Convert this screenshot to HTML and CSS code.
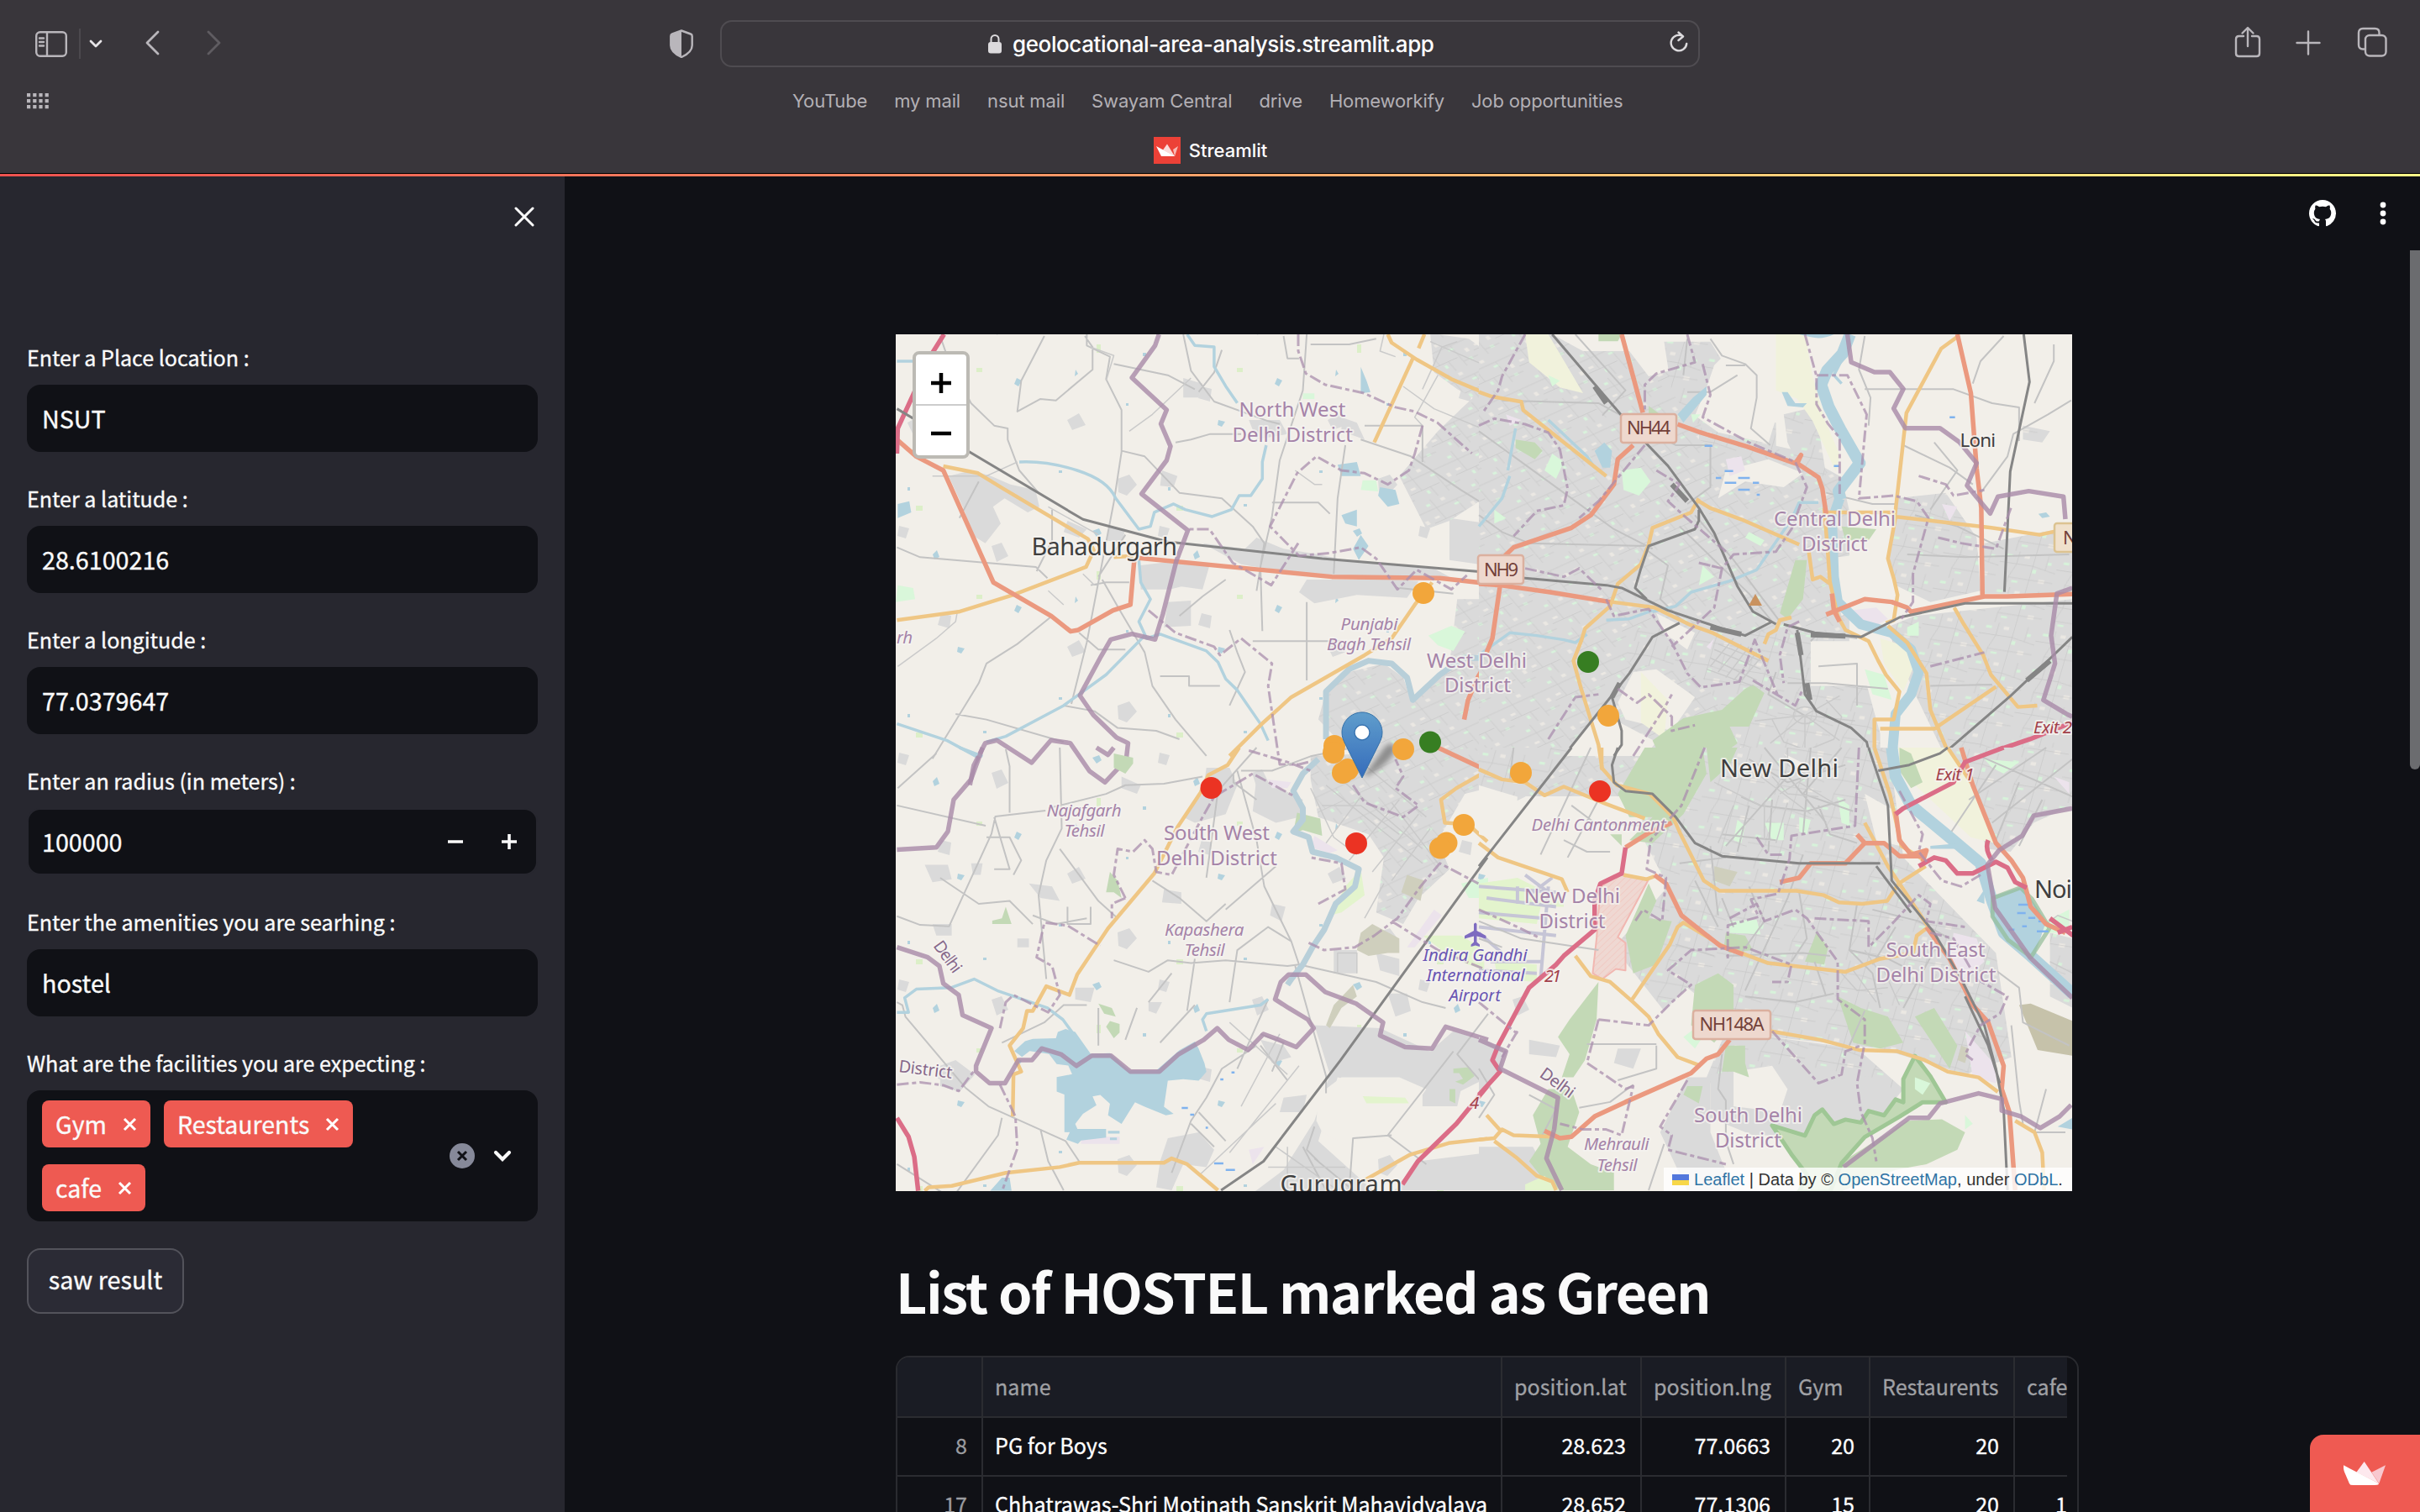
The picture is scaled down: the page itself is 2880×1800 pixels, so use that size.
FILE: index.html
```html
<!DOCTYPE html>
<html lang="en">
<head>
<meta charset="utf-8">
<title>Streamlit</title>
<link rel="stylesheet" href="styles.css">
</head>
<body>
<header class="chrome">
  <div class="toolbar">
    <div class="tools-left">
      <svg class="ic-sidebar" width="38" height="31" viewBox="0 0 38 31"><rect x="1.2" y="1.2" width="35.6" height="28.6" rx="4.5"/><path d="M14 1v29M5 8.500h5M5 13h5M5 17.500h5"/></svg>
      <i class="divider"></i>
      <svg class="ic-chev" width="16" height="12" viewBox="0 0 16 12"><path d="M2 3l6 6 6-6"/></svg>
      <svg class="ic-back" width="20" height="32" viewBox="0 0 20 32"><path d="M17 3L4 16l13 13"/></svg>
      <svg class="ic-fwd" width="20" height="32" viewBox="0 0 20 32"><path d="M3 3l13 13L3 29"/></svg>
    </div>
    <svg class="ic-shield" width="28" height="34" viewBox="0 0 28 34"><path d="M14 1.500l11 4q1.700.6 1.700 2.500v11c0 7-6 11-12.700 14C7.300 30 1.300 26 1.300 19V8q0-1.900 1.700-2.500z" class="line"/><path d="M14 1v32C7.300 30 1.300 26 1.300 19V8q0-1.900 1.700-2.500z" class="solid"/></svg>
    <div class="url">
      <svg class="ic-lock" width="18" height="24" viewBox="0 0 18 24"><rect x="1" y="10" width="16" height="13.500" rx="3"/><path d="M4.500 11V6.500a4.500 4.500 0 0 1 9 0V11"/></svg>
      <span class="address">geolocational-area-analysis.streamlit.app</span>
      <svg class="ic-reload" width="22" height="27" viewBox="0 0 22 27"><path d="M16 6.200A9.300 9.300 0 1 0 20.200 15M10.500 1.500l5.500 5-5.500 4.500"/></svg>
    </div>
    <div class="tools-right">
      <svg width="32" height="38" viewBox="0 0 32 38"><path d="M11 12H5.500Q2 12 2 15.500v17Q2 36 5.500 36h21q3.500 0 3.500-3.500v-17Q30 12 26.500 12H21M16 24V2.500M9.500 8.500L16 2l6.500 6.500"/></svg>
      <svg class="ic-plus" width="30" height="30" viewBox="0 0 30 30"><path d="M15 1.500v27M1.500 15h27"/></svg>
      <svg width="36" height="36" viewBox="0 0 36 36"><rect x="10" y="10" width="24.500" height="24.500" rx="5"/><path d="M9.500 26.500H7Q2 26.500 2 21.500V7Q2 2 7 2h14.500q5 0 5 5v2"/></svg>
    </div>
  </div>
  <div class="bookbar">
    <svg class="ic-grid" width="26" height="19" viewBox="0 0 26 19"><path d="M0 2.200h26M0 9.200h26M0 16.200h26"/></svg>
    <nav class="bookmarks"><a>YouTube</a><a>my mail</a><a>nsut mail</a><a>Swayam Central</a><a>drive</a><a>Homeworkify</a><a>Job opportunities</a></nav>
  </div>
  <div class="tab">
    <svg width="32" height="32" viewBox="0 0 32 32"><path fill="#ec4137" d="M0 0h32v32H0z"/><path fill="#f8b9b5" d="M29 11l-6 4 2 8z"/><path fill="#fbdcda" d="M16 8.500l-5 7L25 23z"/><path fill="#fff" d="M3 11l6 12h16.500z"/></svg>
    <span>Streamlit</span>
  </div>
</header>
<div class="app">
  <aside class="sidebar">
    <div class="side-top"><svg width="24" height="26" viewBox="0 0 24 26"><path d="M2 3l20 20M22 3L2 23"/></svg></div>
    <div class="field"><label>Enter a Place location :</label><div class="input">NSUT</div></div>
    <div class="field"><label>Enter a latitude :</label><div class="input">28.6100216</div></div>
    <div class="field"><label>Enter a longitude :</label><div class="input">77.0379647</div></div>
    <div class="field"><label>Enter an radius (in meters) :</label><div class="input number"><span>100000</span>
      <svg width="84" height="20" viewBox="0 0 84 20"><path d="M0 10h18M64 10h18M73 1v18"/></svg></div></div>
    <div class="field"><label>Enter the amenities you are searhing :</label><div class="input">hostel</div></div>
    <div class="field"><label>What are the facilities you are expecting :</label>
      <div class="multi">
        <div class="tags">
          <span class="tag">Gym<svg width="17" height="17" viewBox="0 0 17 17"><path d="M2 2l13 13M15 2L2 15"/></svg></span>
          <span class="tag">Restaurents<svg width="17" height="17" viewBox="0 0 17 17"><path d="M2 2l13 13M15 2L2 15"/></svg></span>
          <span class="tag">cafe<svg width="17" height="17" viewBox="0 0 17 17"><path d="M2 2l13 13M15 2L2 15"/></svg></span>
        </div>
        <svg width="76" height="30" viewBox="0 0 76 30"><circle cx="15" cy="15" r="15" fill="#868999"/><path d="M10 10l10 10M20 10L10 20" stroke="#101116" stroke-width="3"/><path d="M55 11l8 8 8-8" stroke="#fafafa" stroke-width="4.200" stroke-linecap="round" fill="none"/></svg>
      </div>
    </div>
    <button class="run">saw result</button>
  </aside>
  <main class="main">
    <div class="app-tools">
      <svg width="32" height="32" viewBox="0 0 16 16"><path fill="#fff" d="M8 0C3.580 0 0 3.580 0 8c0 3.540 2.290 6.530 5.470 7.590.4.070.55-.17.55-.38 0-.19-.01-.82-.01-1.490-2.010.37-2.530-.49-2.690-.94-.09-.23-.48-.94-.82-1.130-.28-.15-.68-.52-.01-.53.63-.01 1.080.58 1.230.82.72 1.210 1.870.87 2.330.66.07-.52.28-.87.51-1.070-1.780-.2-3.640-.89-3.640-3.950 0-.87.31-1.590.82-2.150-.08-.2-.36-1.020.08-2.120 0 0 .67-.21 2.200.82.64-.18 1.320-.27 2-.27s1.360.09 2 .27c1.530-1.040 2.200-.82 2.200-.82.44 1.100.16 1.920.08 2.120.51.56.82 1.270.82 2.150 0 3.070-1.870 3.750-3.650 3.950.29.25.54.73.54 1.480 0 1.070-.01 1.930-.01 2.200 0 .21.15.46.55.38A8.010 8.010 0 0 0 16 8c0-4.420-3.580-8-8-8z"/></svg>
      <svg width="8" height="28" viewBox="0 0 8 28"><g fill="#fff"><circle cx="4" cy="4" r="3.400"/><circle cx="4" cy="14" r="3.400"/><circle cx="4" cy="24" r="3.400"/></g></svg>
    </div>
    <section class="content">
      <div class="map">
<svg class="tiles" width="1400" height="1020" viewBox="1066 398 1400 1020">
<defs>
<pattern id="streets" width="138" height="118" patternUnits="userSpaceOnUse" patternTransform="rotate(-32)"><rect width="138" height="118" fill="#dadada"/><path fill="#d9f3dc" d="M14 12h11v8H14zM80 44h16v7H80zM42 88h8v12h-8zM110 96h12v8h-12z"/><path fill="#ebe8e3" d="M58 10h12v10H58zM118 62h10v14h-10zM10 60h14v8H10z"/><path class="st" d="M0 34h138M0 80h88M34 0v80M94 34v84M60 80v38M94 100h44"/></pattern>
<pattern id="streets2" width="150" height="130" patternUnits="userSpaceOnUse" patternTransform="rotate(12)"><rect width="150" height="130" fill="#dadada"/><path fill="#d7f2da" d="M14 14h15v9H14zM90 56h10v14H90zM44 104h16v7H44zM124 24h10v10h-10z"/><path fill="#ebe8e3" d="M60 10h14v12H60zM112 88h16v14h-16z"/><path class="st" d="M0 45h88l62 15M45 0v45l-12 50v35M88 0v130M33 95h117M122 0v54"/></pattern>
<pattern id="ponds" width="310" height="270" patternUnits="userSpaceOnUse"><g fill="#b2d2de"><path d="M20 20h4v3h-4zM60 92l8-3 3 6-6 4zM150 40h3v4h-3zM180 120l5-5 3 8-6 3zM240 60h4v3h-4zM280 180l6 3-4 7-5-3zM100 210h3v3h-3zM120 150h4v4h-4zM40 170l3 5-4 3zM210 230l8 2-4 6-5-2z"/></g><path fill="#dadada" d="M90 30l14-5 9 12-12 13-10-4zM250 110l12-4 8 16-14 7zM30 230l14-8 8 14-16 6zM190 190l12 3-2 15-14-4zM140 86l12 3-4 12-10-3z"/><path fill="#dcefc8" d="M160 62h8v6h-8zM65 140h5v10h-5zM232 168h7v5h-7z"/></pattern>
<pattern id="hatch" width="14" height="14" patternUnits="userSpaceOnUse" patternTransform="rotate(38)"><rect width="14" height="14" fill="#efd8d2"/><path stroke="#f0b5ae" stroke-width="2" d="M0 0v14"/></pattern>
<linearGradient id="pin" x1="0" y1="0" x2="0" y2="1"><stop offset="0" stop-color="#5f9dcc"/><stop offset="1" stop-color="#356cbb"/></linearGradient>
<filter id="soft" x="-30%" y="-30%" width="160%" height="160%"><feGaussianBlur stdDeviation="3"/></filter>
</defs>
<rect x="1066" y="398" width="1400" height="1020" fill="#f2efe9"/>
<rect x="1066" y="398" width="760" height="1020" fill="url(#ponds)"/>
<g class="nw" transform="translate(1050 380) scale(.4592 .3333)">
<path class="town" d="M172 560l60-20 50 20 50 30 65 20 10 60-30 20-60-50-30 30 20 60-40 70-35-30-20-90zM590 740l40 10-10 50-40-10zM665 880l90-15 95 5-20 95-55-10-30 10-75 0zM830 800l110 20 30-40 70 40 90 20 70 20 230 30 40 30-200 15-300-50-40-10zM1100 930l110 0 120 0 60 5-30 60-130-10-110 30-40-40zM740 1010l60-5 0 90-70 5zM1110 20l-40-60 100 0 30 40zM780 210l50 20-10 50-40 0zM480 720l50 30-20 30-40-20zM950 360l80 0 20 50-80 20zM1190 350l40 20 20 60-60-30zM1470 710l100 20v150l-100-20zM725 540l40 20-10 40-35-5zM65 370l25-20v90z"/>
<path class="street" d="M1340 560l100-160 60-80 70-90v400l-100 90-60 30zM1420 50l100 20 60 60v190l-90-70-60-60z"/>
<path class="street" d="M1490 1000h90v560h-360l-90-130 20-100 60-70 90-30 50 50 20 80 100-130z"/>
<path class="green" d="M1245 575l35 0 5 40-45-5zM1090 265l30 0 0 20-30 0zM40 950l40 10 5 40-50 10zM1415 1130l60-35 35 20-30 70-40-20z"/>
<path class="water" d="M1240 170l15 50 10 40-25 5zM1290 600l40 10 10 50-30 10-25-40zM1180 520l50-10 10 50-50 0zM1240 770l20 40-25 50-15-40zM40 660l30-10 5 40-35 20zM1190 700l40-20 0 60-30-10z"/>
<path class="minor" d="M420 60l-60 160-10 110 60-45 40 5 95-110 0-80-20-40M530 54l0 40 60 40-10 80 40 110 0 150-20 180-70 500-40 220M600 160l140 40 70 50M780 54l20 130 60 110 140 70 30 10M880 110l-20 80-40 70M1100 54l-10 200-60 250-20 200-30 180 5 230M1240 430l130 60 130 120 70 60M150 60l20 80 60 160 60 80 35 10 0 40 30 110 50 80M620 470l60 20 90 130 110 20 80 100 30 60-20 170M760 440l40-10 50-20 80 0M38 815l60 35 300 35 30 40M540 950l40-10 60 0M400 900l40-110 0-110M560 920l70-150M510 1120l50 60 70 0M570 930l50 120 60 140 20 120 60 120 80 130M440 1060l-90 100-80 70-20 70-80 180-40 90M1040 60l10 80 30 0M1110 90l100 0 70-20M1200 450l-20 190-10 270M960 1150l150 0 80 0M1100 1010l0 280M250 580l-50 130M1250 380l150 0 0 130M890 930l-60 60-60 70M900 1110l20 80 20 70-40 120M470 1380l80 20 60 60 100 10 60 30M190 1410l80 20 200 80M720 1275l75 0 0 35 80 0M1010 655l120 0 30 40M1340 960l140 20"/>
<path class="thin" d="M540 100l60 30-20 90M640 400l60-60 100-130M130 560l140 0 80-50M430 670l130 100M520 910l30 40M1350 240l80 80 140 80M1400 250l50-150 40-20M1420 80l150 90M1300 54l-10 60 40 20M1070 540l50 50 20 0M1440 200l-60 150 20 30M40 1240l100-100 50-60 5-40M430 970l40 50"/>
<path class="stream" d="M355 510q70-5 150 30t100 100l60 110 30-10 10-50 50-30 30 20 70 25 50-25 20-50 30 0 30-60 0-60 10-60M790 54l20 40 50 5 0 70 30 70 30 60M665 860l5 80 25 60-30 80 20 60 35-15 60 30 60 30 30 40 20 60 30 40 20 40 40 80 20 60M680 1130l-100 140-110 110-150 110-50 20M38 1445l130 60 80 60M38 150h60"/>
<path class="stream wide" d="M1150 1500l0-170 60-80 50-30 60 10 40 50 15 80 70-90 60-60 70 0"/>
<path class="sec" d="M38 1075l160-30 140-60 190-100 20-60-15-40-220-180-65-55-90-25M600 850l50-5M1405 54l-15 50M1375 140l-100 300M1310 54l10 30 65 60 90 70 95 55M1425 940l-45 80-60 120-70 60-190 150-80 100-80 110"/>
<path class="trunk" d="M38 430l50 60 70 50 130 400 150 120 50 55 20-5 90-70 45-20 10-160M665 853l300 40 200 27 280 5 130 20M1568 1220l-25 60-25 80-10 70"/>
<path class="mway" d="M160 54L130 120 40 390l-2 90"/>
<path class="rail" d="M38 320L520 715l220 80 400 60 420 48"/>
<path class="bound" d="M717 54l-10 40-60 115 90 115-15 50 25 80-10 50-65 120 120 130-30 110-35 190-20 90-60-20-55 20-25 60-55 140 35 70 60 80 30 20-5 60-55 80-40-40-50-100-50-10-50 80-90-80-30 10-30 80-10 70"/>
<path class="dash" d="M1078 54l0 60 20 80 50 40 100 30 80 50 50 15 60 40 90 110M1400 380l-20 100-15 60-55 50-60-40-60-10-65-50-50 60-70 190 75 105 80-10 80-20 40 40 55 110 50-70 90 70 40-50M1078 800l-70 150-100-80-60-120-60 0M690 1040l70 80 100 50 15 30 55-60 80 90-10 80 30 280 50 0 60-20"/>
</g>
<g class="ne" transform="translate(1760 380) scale(.4592 .3333)">
<path class="street" d="M0 54h190l80 60 120 0 50 90 160-60 30 60-60 120 40 80 200 60 130 100 20 120 0 700-240 80-160 240H0z"/>
<path class="street2" d="M480 80l120 0 40 90 60 30-40 100-100 80-60-120zM790 340l60-20 30 60 20 180-60 0-40-120zM400 1100l500 30 80 50 60 300 0 100-340 0-120-300-200-60zM1080 640l130-20 80 160 10 190-130 40-90-60-20-90zM1130 1060l408-60v560h-330l-70-200-50-150-30-110zM1310 800l228-60v240l-150 0-80 0zM1410 380l70 20-20 40-50-10zM580 330l190 40 0 120-110 0-90-60z"/>
<path class="bgc" d="M690 54l80 0 0 300-20 90-130-40-60-60 30-100 20-80zM640 540l110-40 90 50-50 50-100-20-70 60zM930 850l120-20 20 150-60 20-70 60-20-120zM400 1260l60-10 100 100-60 120-120-40-20-60zM860 1150l100 0 60 60 0 100-160 0zM460 1050l100 70-20 60-60-60zM220 1560l80-130 50 0 110 80-30 50z"/>
<path class="sand" d="M770 54l75 0 20 150 30 150 40 130-10 60-60-180-40-80-55-30zM120 54l60 0 90 210-60-20-80-90zM420 1260l70 100-10 140-60-60zM1040 1140l70 30 20 60-30 100-50-100z"/>
<path class="forest" d="M95 430l50 10 20 30-20 30-50-40zM940 740l90 10-20 40-60 0zM820 860l30 0-10 140-40 70-20-20zM690 1320l20-15 30 30-40 120-20 0-30 0 20 60-50 50h-150l-20-60 80-80 100-30zM310 54l60 0-10 25-50 0zM440 310l30 30-30 10z"/>
<path class="green" d="M370 540l50-10 25 50-30 50-40-20zM190 480l30 30-20 60-30-30zM550 340l25 0-20 30zM1000 1250l50 20 20 90-50-20zM580 880l30 40-40 30zM40 680l30 30-30 20zM180 200l30 20-20 20zM700 760l40 30-10 20-40-30zM1110 1100l30-20 0 50-30 0z"/>
<path class="pink" d="M640 500l40-10 10 50-40 20zM960 1040l70-10 30 40-50 40zM1200 660l40 10-20 50zM70 340l40 20-30 20zM590 1170l20-30-10 40z"/>
<path class="minor" d="M540 70l-10 130M600 70l30 60 60 30 30 40 0 80-15 110 50 60M640 165l50 0M1000 250l230 0 100 50 70 15 0 120M1360 60l-60 90-20 80M1535 290l-60 50-90 70-15 80-80 150M1100 450l120 80 60 60M1440 300l50-150 0-60M1180 440l60 100-70 140M1000 60l-15 120 30 100-5 100M0 400l100 100 150 150 100 100 100 70M0 700l60 60 70 40 300 10M60 290l250 10 200 150 90 0 0 150-60 60M540 260l60 0 70-60M250 54l130 200-60 90M520 740l180 240 60 100M560 700l100 160 120 220M880 1240l100-10 0 150M860 1150l20-30 100 20M800 1300l100 0 160 20M850 1420l-100-80 20-80M1170 1310l160-5M1110 840l150 10 270-10M1130 700l110 40 120 80M900 620l120 40 60 0M430 820l60 60-20 120 60 80"/>
<path class="st2" d="M600 1240l60-100M620 1260l60-100M640 1280l60-110M660 1290l60-100M680 1290l50-80M610 1180l120 70M600 1210l120 80M590 1250l120 60M620 1160l110 60M845 1415m-30 0a30 30 0 1 0 60 0a30 30 0 1 0-60 0M845 1415l-130 20M845 1415l-90 100M845 1415l0 145M845 1415l90 90M845 1415l130 20M845 1415l90-70M760 1430l30 80 60 30 70-40 20-80-40-60"/>
<path class="river" d="M962 54l-20 70-40 60-15 50 20 80 30 80 50 120-55 100 5 30"/>
<path class="river2" d="M935 640l-20 80 5 200 10 90 60 80 80 30 50 60 20 80-20 80-40 70-10 160"/>
<path class="water" d="M830 54h90q-30 20-60 10zM515 340l40-60 35-40 0 30-60 100zM785 260l15 0 20 40 30 0-10 15-40-5zM300 470l25-30 20 30-5 60-20 0zM1450 695l20-5 10 15-20 5z"/>
<path class="stream" d="M180 360l100 130 20 40M75 540l20-150M0 740l60-100 20-80M880 655l-50 0-20 60-90 180-70 40-100 40-40 50-60 20M330 1075l60-5 60-30M0 1200l80-80 70 10 70 15 30 10 30-30M940 230l-20-30 30-80"/>
<path class="blue" d="M585 452h20M637 542h22M614 567h14M672 567h30M637 584h30M710 584h16M672 609h30M720 627h8M920 524h14M1220 350h14"/>
<path class="sec" d="M0 260l30 15 80 20 5 30 215 235M570 650l30 25 80 40 150 90M570 640l-20 50-100 55-10 60-20 70-60 70-20 80-65 80-10 45-20 70 20 100 45 200 10 90M345 1010l110 20 90 60 60 30 145 100M740 1160l10-35 20-15 10-35 30-10M900 690l180 0M1238 65l-40 40-90 230-30 370 250 40 125 25 50-15M1080 705l-20 150 15 70 10 60-10 90-20 10M855 830l10 100 20-10 25 25-5-100-10-170M910 940l20 120 20 50 60 40 25 70 20 50 35 60-15 100-50 0 0 170M1060 1095l50 60 50 110 10 130 50 165M1040 1463l140 0 160-150M1232 1030l25 60 50 110 20 70 70 115 50-5"/>
<path class="trunk" d="M370 54l55 280M515 375l60 30 120 50 125 60 15-30-10 30 55 50 10 40 10 90M400 450l-40 50-10 90-60 110-50 45-150 70-30 40M0 945l55 5 130 25 155 35M55 950l-20 190-15 50M900 1055l100-55 70 10 40 20 10 15 190-55 60 0 168-8M1240 54l35 210 15 270 12 140 3 310M915 980l5 60 15 40"/>
<path class="mway" d="M1538 1440l-110 60-150 70"/>
<path class="rail" d="M190 54l130 210 100 160 70 100 80 150 40 90 60 190 40 90 60 45M570 680l0 40-10 30-120 60-20 80-15 70 30 40M0 910l330 40 40 10 120 80 130 60 70 30 70-50M520 1085l-70 50-60 130-170 295M345 1350l25 120 0 50-20 40M790 1090l80 30 120 15 100-70 170-50 278 0M825 1110l20 230 30 60 90 60 40 50 10 60M1412 54l15 170-50 320-15 430M1538 1135l-60 80-100 130-180 215"/>
<path class="rail fat" d="M600 1100l80 25M860 1127l90 5M825 1120l10 80M850 1300l8 60M300 240l30 60M500 590l40 60M1420 1290l60-70M345 1350l20-50"/>
<path class="bound" d="M955 54l10 100 60 35 40 0 35 60-25 70 30 70 90 0 50 50 45 75-25 80 60 100 20-60 80-20 90 20 5 80M1538 960l-40 20-15 150 10 100-30 130 60 50 15 10"/>
<path class="dash" d="M120 54l-60 150-10 50-40 80M540 54l20 100-100 40-30 40 0 100M580 160l20 110-20 80 120 90 120 70 30 90-40 150-40 80-110 10-30 50-60-20M845 54l30 150 0 100 30 70 30 50 0 200M875 200l80 0 50 140-20 300 90-10 60 20 30 60-40 200 0 100-30 60M0 380l40-25 80 20 60 30 30 60 20 140-10 60-70 20-60 90M430 450l-120 200-50 60M330 1000l20 60 90-25 60 120 40 110 35 50 100-20 40-150 60 200M570 870l60 20-20 140-110 140M710 1290l110 90 20-60M830 1080l-30 20-20 100 10 100M460 540l60 50-30 60 40 50 110 130M1140 560l70 30 20 40 80-20M1190 780l60 20 90 20 40-150M1170 1240l140-50M120 890l100 30 40-30 60 80M400 1560l80-170 20-50M180 1500l70-150 60-10M360 1320l50 50 30-30 60 80 0 50 60-20"/>
</g>
<g class="sw" transform="translate(1050 890) scale(.4592 .3444)">
<path class="town" d="M840 70l60 0 20 60-30 100-80 30-30-20 50-80zM970 100l60 40 60 40-10 60-60 20-60-40zM110 405l60 0 10 50-50 10zM380 470l60 10 20 50-50-10zM730 490l45 10 0 40-50-5zM1010 540l35 10-10 50-30-20zM500 830l50 0-10 50-40-10zM690 880l35 0-15 40-20-10zM130 610l50 0 0 40-40 0zM150 1100l40-20 50 50-40 60-50-20zM620 100l50 30-10 30-40-20zM1170 700l60 0 0 80-60 0zM1310 850l50 0 10 60-40 20zM230 400l30 0-5 40-20 0zM350 660l30 0 0 30-30 0zM1280 710l60 20 0 60-50-20z"/>
<path class="street" d="M1110 30l460-30 0 140-60 20-70 160 30 100-80 100-40 90-70-40 20-190-40-80-130-60-20-130z"/>
<path class="town" d="M1120 960l170 10 130 80 60-70 90 40v120l-90 60-80 0-220-60-50 220 100 120 40 50-30 90h-320l40-80 80-80 80-170 40-160zM1568 1400v130h-240l60-100z"/>
<path class="town" d="M740 1350l80-20 40 60-20 60-60-10-30 90-40-10 10-90zM980 1010l60 20 20 40-50 20zM1040 1210l60-10-10 60-60 0zM1400 1180l100 0-10 60-90 0z"/>
<path class="bgc" d="M1130 1200l60-60 150 0 70 40-60 120-50 60-100 10-60-40-15-40z"/>
<path class="green" d="M1500 470l70-20v70l-50 0z"/>
<path class="lime" d="M1240 420l10 90-60 60-30 10 40-100zM1245 1205l110 5 10 20-110 0zM1400 650l100 0 60 50 0 70-80-40z"/>
<path class="forest" d="M600 20l50 15 0 20-20 35-30-20zM590 430l20 30 10 60-20-20-20 0zM320 550l15 60-50 0 0-12 25-8zM560 885l35 15 10 30-30-10zM590 945l25 10 0 30-15 20-20-40zM1075 225l60 20 5 60-50-20-25 10zM1480 1110l40-5 15 30-30 30-20-10 20-10-10-20-15 0zM1470 1180l15 0 0 50-15-10z"/>
<path class="brush" d="M1240 640l30-30 70 50 0 50-30 0-50 10-30-20zM1220 820l10 40-40 40-30 70-10-10 20-70zM1360 440l45 20-10 70-50-30z"/>
<path class="pink" d="M1120 305l60 50-20 10-50-20zM515 1345l100 0 0 25-100 0zM1430 560l20 20-70 110-20 0zM1000 110l60 10-10 20-40 0zM950 1390l40-10-30 60z"/>
<path class="water" d="M370 1015l20-8 60-2 5-22 20-10 25 10 40 75 50-2 50 60 70 0 60-70 40-30 10 25 15 50 5 30-20 30-40-5-40 5-10 90 25 25-20 5-55-30-25-15-35 75-35-30 5-40-25-30-20 5 10 30-35 30-20 35 10 30-38-2 0-130-20-10 0-50 40-10-10-30-30-5-20-35-50-10-20 20-20-20zM490 1318h90l0 30-65 10-8 12-30-15zM585 1325h30v9h-30zM590 1348h18v9h-18zM280 1532l30-45 20 0 5 45z"/>
<path class="minor" d="M215 1175l-155-245-8-40-14-10M215 1175l60 65 200 120 35 70M38 583l60 30 75 5 110-320 10-60 130-20M430 210l150-50 50-30 100-5 100-25M290 420l40 0-40-180M330 225l0-160-10-60M460 0l5 280-40 110-20 120 20 290M38 200l230 70M920 80l50 240 20 160 70 190 20 80 200 60 120 70 60 20M910 90l0 30 60 60M1070 755l80 380 0 60M970 0l-100 150-30 300M1080 750l-30 5-160-20-90 10-60-10-50 40-90-40M460 350l100 180 50 60M700 460l70 60 70 80 50-60M890 560l130-150M1060 670l-60-50-80 80-20 180M930 80l80 0 100-50 110-30M40 140l100-120M270 310l60 0 30 80-20 50M150 450l100 90 80-10 60 80M530 590l-80 20-60-30M410 1320l20 110 40 100M38 1440l120 100M970 1030l-90 80-40 100-40 80-50 180M980 1030l70 120M980 990l60 30-30 100M1000 870l-80 240M1120 1310l-20 80 30 40M1320 1340l-100 10-10 180M1120 1420l100 110M1480 1050l-170 290 100 100M1090 1380l60 150M1570 920l-80 140 78 120M180 1560l120-220 10-60M530 890l-60 0-50 60-110 70M480 550l0 60 60 0 0-60M820 1260l70 100M800 1300l60 80M810 730l-20 180M750 780l-60 100M560 900v130M630 1010l30-110M720 1020l90-130"/>
<path class="st2" d="M1150 130l250 270M1180 100l220 250M1250 60l160 180M1150 330l90-160M1210 390l130-210M1270 430l120-200M1320 460l100-180M1250 590l50-120M1440 400l-120-210M1110 140l60 170 60 60M1140 200l100 0 100 100M1050 1130l-150-180M930 1240l100-250M820 1480l200-250M900 1400l180-300M1020 1380l160 150M1000 1450h200M1050 1380v150M1180 780v-70h50v70"/>
<path class="stream wide" d="M1130 40l-40 50-25 60 25 60 0 40-25 40 40 20 10 50 60 20 60 40-10 60-50 60-30 90-30 60-25 60-30 50-10 20"/>
<path class="stream" d="M200 0l60 30M1000 870l-20 20-140 30-10 20 10 40M38 915l30 0-10-50 30-30 90-5 60-30 60 40 130 60 40 40 60 110"/>
<path class="blue" d="M776 1246h16M798 1269h10M860 1437h24M890 1460h24M905 1123h8M876 1147h8M838 1314h6"/>
<path class="sec" d="M925 0l-30 60-50 35-20 60-60 120-60 160-120 190-80 160-20 70-60-30-35 85-15 0-10 60-35 60 30 90-20 10-2 145M110 1532l10-12 60-5 140-45 140-20 50-15 220 0 20-15 40 20 80 90M1568 80l-80 60-40 40 10 80 60 5 50 60M1568 1352l-100 15-100 40-120 90"/>
<path class="trunk" d="M1440 0l128 80"/>
<path class="mway" d="M38 1280l30 65 15 70 10 117M1568 1170l-80 130-100 130-40 80"/>
<path class="rail" d="M1568 380l-380 700-200 350-110 100"/>
<path class="bound" d="M260 0l-30 110-45 70-15 110-30 55-102 8M38 690l80 35 30 30 10 60 40 40 10 70 75 45-40 130 0 20 35 40 40 0 35-80 35 0 25-40 50 20 40 40 40-35 50 0 50 55 75 0 50-60 65-50 35-40 30 40 50 35 40-55 40 20 45 25 45-65-15-30-50-40-35-30 15-60 20-25 45 0 50 60 80 40 70 65-8 45 65 40 70 5 35-75 110 45M555 0l30 25 15-25"/>
<path class="dash" d="M38 1165l60-8 60 10 40 20 40-70M305 1165l40 110 5 110-40 150M305 970l15-90 20-25 90 60 30-60-20-100-40-30 20-120 60 10 85 70M630 520l-35 20 0 50M630 520l-30-80 10-90 40 10 30-40 20 30 10 80 40 10 80-200 30-70 100-80 110 80M950 10l100 40 60 30M1105 675l40 25 80-10 50-40 60-60 60-110 50-80 100 70M1320 600l120 100 128 70M1130 540l70-50-10-90-80-20M1220 130l30 60 100 50 40-40-60-60 20-40-20-60"/>
</g>
<g class="se" transform="translate(1760 890) scale(.4592 .3444)">
<path class="street2" d="M440 0h620l10 80 30 300 240 330 40 360-120 60-220-90-350-50-150-160-60 80-130-220 140-210-70-180z"/>
<path class="street2" d="M1220 0h318v200l-100 60-60 100-60-10-60-180zM1480 640l60 20v240l-60-40zM0 0h240l-120 170-120 80zM640 980l340 60 120 140-60 100-200-40-110 80-80-60-60-120z"/>
<path class="town" d="M540 1140l60 0 0 190 60 200h-120l-70-200zM0 1000l60 40 0 80-60 80zM0 1380h140l60 150H0zM130 1010l80 20-10 40-70-10zM360 1040l60 0-20 70-50-20z"/>
<path class="town" d="M600 1130l200-40 260 60 30 100-240 90-140 0-110-60z"/>
<path class="sand" d="M1085 0l130 0 60 130 60 200-60-20-160-200z"/>
<path class="bgc" d="M230 180l180 40 0 80-50 30-60 70-140-40 40-100zM0 130l100 40-10 170-90-40zM1000 160l80 60 10 120-60-20zM790 20l60 40-10 30zM660 1120l100-20 40 80-20 80-120-20zM1390 880l60 100 80 180-30 80-80-40-40-200z"/>
<path class="forest" d="M430 0l150 0 10 90-60 140-80 100-60-10 60-80-60 0-30-80zM590 0h80l-20 60-50 60zM440 470l20 60-20 60 60 10-40 150-60 30-20-130 20-60zM310 810l-5 130-30 140-30 60-30 0 20-80-30-60 30-60zM560 820l60-40 40 40 0 120-50 80-60-60zM640 640l50 10 20 50-60 10-15-20zM875 640l30 50-10 60-50-10zM930 860l60 40 70 30 40 90-60 20-70-20zM1130 930l50-30 60 130-20 80-30-60zM180 1180l60 0 20 80-30 120 60 60 60 30 0 60h-160l-60-100 30-60-20-100zM640 1030l50 0 0 60 10 50-40-20-30 0zM540 1170l40 0-10 60-40-30zM1090 0l30 20 30 100-30 20-30-60zM340 300l30 0 0 40z"/>
<path class="forest" d="M1110 1290l90-5 60 45-20 60-80 50-80 20-80 40-60 34h-120z"/>
<path class="reserve" d="M830 1536l20-60-40-70-50-100 85 35 25-70 20-20 30 50 30-15 40 10 20-40 40 15 30-55 20 10 0-80 30-80 40 70 40 90-60 0-60 50-90 70-60 90-30 100z"/>
<path class="green" d="M650 600l70-5 10 50-80-5zM930 170l30 30 0 70-20-10zM670 250l20 20-10 60-20-10zM1400 480l70 120 60-40 0 80-60 0zM1130 1140l40 20-20 40-20-20zM530 1000l60-60-10 60-20 40zM740 260l50 0 0 60-30 0zM1260 1270l20 30-20 20zM830 240l30 10-10 50-20-10zM1310 40l90 10-40 40-30-20z"/>
<path class="lime" d="M0 470l100-20 60 40 60 30 0 30-60 0-10 60-150-20zM40 740l110 10 0 60-100-10zM120 1510l50-30 40 50-90 0z"/>
<path class="pink" d="M1230 640l60 20 20 80-50 60-40-60zM1260 980l80 120 0 60-60-20zM1490 100l40 20 0 40z"/>
<path class="hatch" d="M315 480l50-40 75 15-80 200 20 20 0 95-25-5-35 35-25-20 10-120z"/>
<path class="brush" d="M610 410l60 20-20 50-40-20zM1250 1030l20 10-10 50-20-10z"/>
<path fill="#c6c2aa" d="M1400 890l30-5 108 60v120l-90-20z"/>
<path class="runway" d="M0 480l200 20M20 520l180 30M0 570l170 20M0 620l200 30M30 740l130 0M0 770l150 10M180 480l-20 320M120 440l60 60M190 450l-60 60M100 480v60M0 640l60 70"/>
<path class="minor" d="M690 840l110-320 40-150M630 520l30 100M560 460l60 160M600 340l20 240M700 480l40 120-60 110M830 500l20 160-40 80M520 400l120-20M700 40l100 80 150-60M640 340l160-240M680 170l50 30 120 20 100-40M740 0l160 260M860 0l-20 300M940 0l-100 160 130 60M700 200l-30 160M760 180l-10 180M880 200l30 100 70 30M630 300l140 20M640 720l200-10 70 10M690 860l130 20 100-30M1000 910l-40 120M870 740l30 120M980 540l-20 160 60 80 20 120M1080 620l-60 130M1180 700l-80 200M960 700l100 30 90 60M1020 560l120 40 80 60M630 1060l-10 120 20 40 0 140 20 80M280 1025l180 0M460 1030l0 80-100 40M260 1245l80-20 60-60M0 600l110 60 200 40M0 660l60 30M1340 770l60 60 10 120 120 80M1380 960l20 260 10 80M1470 1180l-30 150 80 0M480 1370l-40 160M130 1200l70 50-40 100M0 1110l40 90-40 80M90 0l-10 110M240 200l60 60 120 10M290 0l-130 370M310 180l-80 200M220 320l60 40 60 0M1300 30l240 140M1340 60l-120 240M1400 120l-60 200M1460 180l-60 160M1270 180l200-180M1330 260l208-220"/>
<path class="st2" d="M760 100l40 60 80 10M720 90l140 140M800 0v60l60 40M660 200l-40 130M740 190v130M800 190l-30 140M610 120l120 80M900 60l-120 100M830 120l100 80M940 780l40 60 80-10M970 770l60 110M1000 700l30 60M1050 770l40 120M540 600l60 60M510 680l100 40M1440 640l60-60 38 20M1480 740l60 40"/>
<path class="river" d="M1070 0l10 100 40 100 100 110 80 90 30 130 30 110 70 80 108 130"/>
<path class="water" d="M1340 510l70-30 60 120-30 120-60-70-40-60zM1170 340l80-10 60 60-30 10-40-50-70 0zM1500 1310l38-30v40zM1290 530l20-40 0 50z"/>
<path class="oak" d="M1332 520l72-36 30 40 45 100-48 100-60-60-40-80z"/>
<path class="blue" d="M1398 543h30M1395 572h22M1424 589h18M1446 635h30M1374 629h14M1408 618h12M1450 600h12"/>
<path class="sec" d="M0 75l60 35 60 10 50 45 50-30 110 60 100 50M0 330l50 50 165 75 15 45M318 0l0 70 40 60 85 30 60 80 20 60 60 160 40 35 200 0 70 15 40 25 60 5 65-10 30-60 70-60M1000 260l60 150 110 220M1025 0l40 160 30 180 60 50M1215 0l60 120M1165 620l-30 30-10 60-85 20-90 45-200-30-120-60-100-80-15 15-20 60-100 195M375 440l60 15 20-10M250 720l40 70 50 20 60 70 40 50 25 60 50 80 60 30M755 980l130 30 100 35 100 5 70 30 60 40 80 20 50 50M0 1355l40-5 20-30 30 20 100 5M40 1360l60 60 50 60 40 20 10 30M20 1270l40 60M1390 1290l50 40 20 70 5 130"/>
<path class="trunk" d="M1250 0l30 130 60 200 40 60 30 60 20 100 40 60 50 30M1080 220l10 100 30 50 40-15-10 40M980 300l20 30 50 0 40 45 60 0M1000 330l-50 70-90 0-30 50-50 15M500 260l-60 35-60 50M455 440l30 30 40 110 100 105 60 30M1160 620l60 110 60 160 40 60 40 150-5 80 20 80 15 270M650 1010l-30 50-30 15-40 50-170 100-80 50-60 70-30 5-40-25"/>
<path class="mway" d="M380 345l-10 90-55 35-15 60 0 100-80 90-20 30-70 80-80 200-15 50 20 40-55 80M1360 0l-100 50-30 70-130 90-20 20M1140 410l40-30 30 10 30 45 40 0 60-40 30 20 20 50 30 20M1320 320q-10 30 10 70M1480 590l60 60M1500 640l38-20"/>
<path class="rail" d="M240 0l-240 410M360 0l-15 60 5 60 30 30 70 10 60 80 50 90 70 45 200 25 210 0M1010 0l50 200 10 260 110 180 70 160 60 160 30 150 20 140 10 280M1035 80l80-20 80-40 20-20M1030 410l90 160M1260 860l60 170 30 130"/>
<path class="bound" d="M0 1010l70 40-15 60 150 100-10 110-20 100 40 110M1538 210l-100 25-30 70-60 50-30 50 20 150 90 170 110 140M945 1450l90-90 80-80 50 0 30-50 100-35 60 20 0 40 50 20 50 40 50-40 30-40"/>
<path class="dash" d="M585 0l-60 200-80 120-10 100 50 30-10 150-50-40-20 40M985 0l-10 270-165 35-5 80-30 120-70 20 20 60-80 30 0 120M720 310l30 60 40 0M650 590l70-50 20 60 80-40 30 30 80 150 0 130 70 70 0 80-20 140 10 100 30 90 10 80M310 940l130 20 60-80 50-60-60-50 60-70 140-10 120 60-10 60-40 0M310 940l-30 150 100 90 20-10-30 170-40-20-60 0-60-20M760 980l80 120 40 60 60-30 10-80 40-20M1090 150l60 150-10 60 60 100 50 20 50-40M870 590l140 10 0 90 60-80 70-100 30 30-10 60 100 20M1170 640l60 20 60 140 80 60-20 60-50 40-40 100 20 20M100 980l-40 90M540 1150l-70 160 30 30-10 50 150 50M0 560l100 60 60 40M0 880l100 110"/>
</g>
<path fill="#c9925f" d="M2089 707l8 14h-16z"/>
<path d="M1754 1100q2-3 3.500 0v8l11 6v3.500l-11-3v7l3.500 3v2.500l-5.200-1.500-5.200 1.500v-2.500l3.400-3v-7l-11 3v-3.500l11-6z" fill="#7e6bc0"/>
<g class="shield"><rect x="1929" y="493" width="66" height="34" rx="3"/><rect x="1759" y="661" width="54" height="34" rx="3"/><rect x="2015" y="1203" width="92" height="34" rx="3"/><rect x="2445" y="623" width="40" height="34" rx="3" class="y"/></g>
<g class="ref"><text x="1936" y="517" textLength="52">NH44</text><text x="1766" y="686" textLength="41">NH9</text><text x="2022.500" y="1227" textLength="77">NH148A</text><text x="2455" y="648" class="br">N</text></g>
<g class="dist"><text x="1474.500" y="496" textLength="127">North West</text><text x="1466.500" y="525.500" textLength="143.500">Delhi District</text><text x="1698" y="795" textLength="119">West Delhi</text><text x="1719" y="824" textLength="79">District</text><text x="2111" y="626" textLength="145">Central Delhi</text><text x="2144" y="655.500" textLength="78.500">District</text><text x="1385" y="999.500" textLength="126">South West</text><text x="1376" y="1029.500" textLength="144">Delhi District</text><text x="1814" y="1075" textLength="114">New Delhi</text><text x="1831.500" y="1105" textLength="79">District</text><text x="2244.500" y="1138.500" textLength="118">South East</text><text x="2232.500" y="1168.500" textLength="143">Delhi District</text><text x="2016" y="1335.500" textLength="129">South Delhi</text><text x="2041" y="1366" textLength="79">District</text></g>
<g class="tehsil"><text x="1595.500" y="750" textLength="68">Punjabi</text><text x="1579" y="774" textLength="100">Bagh Tehsil</text><text x="1067" y="766" textLength="19">rh</text><text x="1245.500" y="971.500" textLength="89">Najafgarh</text><text x="1266.500" y="996" textLength="48">Tehsil</text><text x="1386" y="1114" textLength="94.500">Kapashera</text><text x="1409.500" y="1138" textLength="48">Tehsil</text><text x="1822.500" y="989" textLength="160">Delhi Cantonment</text><text x="1885" y="1369" textLength="77.500">Mehrauli</text><text x="1900.500" y="1394" textLength="48">Tehsil</text></g>
<g class="edge"><text transform="translate(1110 1126) rotate(54)" textLength="42">Delhi</text><text transform="translate(1069 1276) rotate(7)" textLength="64">District</text><text transform="translate(1831 1281) rotate(36)" textLength="46">Delhi</text></g>
<g class="air"><text x="1693.500" y="1144" textLength="124">Indira Gandhi</text><text x="1697.500" y="1168" textLength="117">International</text><text x="1724.500" y="1192" textLength="61.500">Airport</text></g>
<g class="exit"><text x="2420" y="872.500" textLength="46">Exit 2</text><text x="2303.500" y="929" textLength="46">Exit 1</text><text x="1838" y="1168.500" textLength="20">21</text><text x="1749" y="1320">4</text></g>
<g class="city"><text x="1227.500" y="661" textLength="173.500">Bahadurgarh</text><text x="2047" y="925" textLength="141">New Delhi</text><text x="1523.500" y="1420" textLength="145">Gurugram</text><text x="2421" y="1069" textLength="45">Noi</text><text x="2332.500" y="531.500" textLength="42.500" class="small">Loni</text></g>
<path d="M1623 924l26-36q10-7 12 4-6 16-34 32z" opacity=".35" filter="url(#soft)"/>
<g fill="#f2a63b"><circle cx="1694" cy="706" r="13"/><circle cx="1588" cy="888" r="13"/><circle cx="1587" cy="896" r="13"/><circle cx="1604" cy="916" r="13"/><circle cx="1598" cy="920" r="13"/><circle cx="1670" cy="892" r="13"/><circle cx="1914" cy="852" r="13"/><circle cx="1810" cy="920" r="13"/><circle cx="1742" cy="982" r="13"/><circle cx="1721.500" cy="1003.500" r="13"/><circle cx="1714" cy="1009.500" r="13"/></g>
<g fill="#eb3323"><circle cx="1441.500" cy="938" r="13"/><circle cx="1614" cy="1004" r="13"/><circle cx="1904" cy="942" r="13"/></g>
<g fill="#377e22"><circle cx="1890" cy="788" r="13"/><circle cx="1702" cy="883.500" r="13"/></g>
<g transform="translate(1596 847) scale(2)"><path d="M12.500.5C6 .5.5 5.900.5 12.600c0 2.400.9 4.600 1.900 6.600L12.500 39.500 22.600 19.200c1-2 1.900-4.200 1.900-6.600C24.500 5.900 19 .5 12.500.5z" fill="url(#pin)" stroke="#3470a8"/><circle cx="12.500" cy="12.500" r="4.500" fill="#fff" stroke="#3a74b0" stroke-width=".7"/></g>
</svg>
        <div class="zoom"><span><svg width="26" height="26" viewBox="0 0 26 26"><path d="M13 1v24M1 13h24"/></svg></span><span><svg width="26" height="26" viewBox="0 0 26 26"><path d="M1 12h24"/></svg></span></div>
        <div class="attribution"><svg width="20" height="13" viewBox="0 0 20 13"><path fill="#5378dc" d="M0 0h20v7H0z"/><path fill="#f7d748" d="M0 7h20v6H0z"/></svg><span><a>Leaflet</a> | Data by © <a>OpenStreetMap</a>, under <a>ODbL</a>.</span></div>
      </div>
      <h1>List of HOSTEL marked as Green</h1>
      <div class="frame">
        <div class="grid">
          <div class="row head"><span></span><span>name</span><span>position.lat</span><span>position.lng</span><span>Gym</span><span>Restaurents</span><span>cafe</span></div>
          <div class="row"><span>8</span><span>PG for Boys</span><span>28.623</span><span>77.0663</span><span>20</span><span>20</span><span></span></div>
          <div class="row"><span>17</span><span>Chhatrawas-Shri Motinath Sanskrit Mahavidyalaya</span><span>28.652</span><span>77.1306</span><span>15</span><span>20</span><span>1</span></div>
        </div>
      </div>
    </section>
    <i class="scrollbar"></i>
    <div class="badge"><svg width="50" height="28" viewBox="327 240 150 84"><path fill="#f8c8cf" d="M477 253l-50 25 27 40z"/><path fill="#fde9ee" d="M401 240l-28 38 80 40z"/><path fill="#fff" d="M327 253l126 65q0 5-6 5-46 3-95 0l-4-4-18-42q-4-10-3-24z"/></svg></div>
  </main>
</div>
</body>
</html>
```
FILE: styles.css
```css
* { box-sizing: border-box; }
body { margin: 0; width: 2880px; height: 1800px; overflow: hidden; display: flex; flex-direction: column; background: #101116; color: #fafafa; font-family: "Noto Sans CJK SC", "Noto Sans", sans-serif; }
svg { display: block; flex: none; }

/* browser chrome */
.chrome { height: 210px; flex: none; background: #39363b; font-family: Inter, "Liberation Sans", sans-serif; border-bottom: 3px solid; border-image: linear-gradient(90deg, #ee524f, #f4825f 33%, #fdc375 66%, #fdfa88) 1; box-shadow: inset 0 -1px #000; }
.chrome svg { fill: none; stroke: #b9b6bb; stroke-width: 2.400; stroke-linecap: round; stroke-linejoin: round; }
.toolbar { height: 102px; display: flex; align-items: center; padding: 2px 39px 0 42px; }
.tools-left { display: flex; align-items: center; width: 755px; }
.divider { width: 2px; height: 36px; background: #4c494e; margin-left: 14px; }
.chrome .ic-chev { margin-left: 10px; stroke: #e6e4e7; stroke-width: 2.800; }
.ic-back { margin-left: 49px; }
.chrome .ic-back, .chrome .ic-fwd { stroke-width: 2.800; margin-top: -2px; }
.chrome .ic-fwd { margin-left: 54px; stroke: #5f5c61; }
.ic-shield .solid { fill: #b9b6bb; stroke: none; }
.url { width: 1166px; height: 56px; margin-left: 32px; border: 2px solid #4f4c51; border-radius: 14px; display: flex; align-items: center; padding: 0 12px 0 316px; }
.chrome .ic-lock { fill: #dcdadd; stroke: none; }
.ic-lock path { fill: none; stroke: #dcdadd; stroke-width: 2; }
.address { font-size: 26px; font-weight: 500; color: #fff; margin-left: 12px; flex: 1; white-space: nowrap; letter-spacing: -.4px; }
.chrome .ic-reload { stroke: #dcdadd; margin-top: -4px; }
.tools-right { display: flex; align-items: center; margin-left: auto; margin-top: -5px; }
.ic-plus { margin: 2px 43px 0 41px; }
.bookbar { height: 34px; display: flex; align-items: center; padding-left: 32px; font-size: 22px; color: #b3b0b5; }
.chrome .ic-grid { stroke-width: 4.200; stroke-linecap: butt; stroke-dasharray: 4.200 3; margin-top: 2px; }
.bookmarks { display: flex; gap: 32px; margin-left: 885px; margin-top: 1px; white-space: nowrap; letter-spacing: -.14px; }
.tab { height: 71px; padding: 14px 0 0 1px; display: flex; align-items: center; justify-content: center; gap: 10px; font-size: 22px; font-weight: 500; color: #fff; }
.tab svg { stroke: none; }
.app { flex: 1; min-height: 0; display: flex; }

/* input panel */
.sidebar { width: 672px; background: #27272f; padding: 0 32px; display: flex; flex-direction: column; gap: 32px; -webkit-text-stroke: .35px #fafafa; }
.side-top { height: 160px; padding: 35px 4px 0; display: flex; justify-content: flex-end; }
.side-top svg { stroke: #fafafa; stroke-width: 3; stroke-linecap: round; }
.field { display: flex; flex-direction: column; }
label { height: 56px; line-height: 46px; font-size: 25.100px; white-space: nowrap; letter-spacing: -.02px; }
.input { height: 80px; border-radius: 16px; background: #101116; padding: 0 18px; font-size: 28.700px; line-height: 80px; }
.number { border: 2px solid #27272f; display: flex; align-items: center; justify-content: space-between; padding: 0 21px 0 16px; line-height: 76px; }
.number svg { stroke: #fafafa; stroke-width: 3.600; }
.multi { height: 156px; border-radius: 16px; background: #101116; padding: 12px 29px 12px 18px; display: flex; align-items: center; justify-content: space-between; }
.tags { width: 410px; display: flex; flex-wrap: wrap; gap: 20px 16px; }
.tag { height: 56px; border-radius: 8px; background: #ee5a52; padding: 0 16px; font-size: 28.500px; line-height: 54px; display: flex; align-items: center; gap: 19px; }
.tag svg { stroke: #fff; stroke-width: 3; }
.run { align-self: flex-start; width: 187px; height: 78px; border: 2px solid #53535b; border-radius: 16px; background: #2b2b35; color: #fafafa; font: 28.700px "Noto Sans CJK SC", sans-serif; padding: 0 0 5px; white-space: nowrap; }

/* page body */
.main { flex: 1; position: relative; padding-left: 394px; }
.app-tools { height: 188px; padding: 28px 40px 0 0; display: flex; justify-content: flex-end; gap: 52px; }
.app-tools svg:last-child { margin-top: 2px; }
.content { width: 1408px; }
.map { position: relative; width: 1400px; height: 1020px; overflow: hidden; }
.zoom { position: absolute; left: 20px; top: 20px; width: 68px; height: 128px; border: 4px solid #bcbab4; border-radius: 8px; background: #fff; display: flex; flex-direction: column; }
.zoom span { flex: 1; display: flex; align-items: center; justify-content: center; padding-top: 8px; }
.zoom span:first-child { border-bottom: 2px solid #ccc; }
.zoom svg { stroke: #000; stroke-width: 4.500; }
.attribution { position: absolute; right: 0; bottom: 0; width: 486px; height: 28px; background: rgba(255, 255, 255, .8); font: 20px/28px "Liberation Sans", sans-serif; color: #333; display: flex; align-items: center; gap: 6px; padding-left: 10px; white-space: nowrap; letter-spacing: .02px; }
.attribution a { color: #2f74a5; }
h1 { margin: 0; height: 196px; padding: 68px 0 0; font-size: 64.800px; line-height: 100px; font-weight: 600; white-space: nowrap; letter-spacing: -1.550px; }
.frame { height: 240px; border: 2px solid #2a2b30; border-radius: 16px; overflow: hidden; }
.grid { width: 1392px; overflow: hidden; }
.row { display: grid; grid-template-columns: 102px 618px 166px 172px 100px 172px 62px; height: 70px; font-size: 25.100px; line-height: 65px; color: #fff; -webkit-text-stroke: .3px; }
.row span { border-right: 2px solid #2b2c31; border-bottom: 2px solid #2b2c31; padding: 0 17px; text-align: right; white-space: nowrap; overflow: hidden; }
.row span:nth-child(2), .head span { text-align: left; padding: 0 0 0 14px; }
.row span:first-child { color: #9b9ca0; }
.row span:last-child { border-right: 0; padding-right: 0; }
.head { height: 72px; background: #1a1c24; color: #a0a1a5; line-height: 69px; }
.head span { color: #a0a1a5; }
.scrollbar { position: absolute; right: 0; top: 88px; width: 12px; height: 618px; background: #6b6c6f; border-radius: 0 0 6px 6px; }
.badge { position: absolute; right: 0; bottom: 0; width: 131px; height: 92px; border-radius: 16px 0 0; background: #ef5a52; padding: 32px 0 0 40px; }

/* map layers */
.tiles path { vector-effect: non-scaling-stroke; stroke-linejoin: round; }
.st { fill: none; stroke: #c6c6c6; stroke-width: 1.600; }
.st2, .minor, .thin { fill: none; stroke: #c3c3c3; stroke-width: 2; }
.thin, .st2 { stroke: #cacaca; stroke-width: 1.500; }
.town { fill: #dadada; }
.street { fill: url(#streets); }
.street2 { fill: url(#streets2); }
.bgc { fill: #f2efe9; }
.sand { fill: #f1f2dc; }
.green { fill: #d9f7da; }
.lime { fill: #e3f4cd; }
.forest { fill: #c3d9b6; }
.reserve { fill: #c3d9b6; stroke: #9fc795; stroke-width: 5; }
.oak { fill: none; stroke: #94bd98; stroke-width: 5; opacity: .7; }
.brush { fill: #cfcfbd; }
.pink { fill: #ece3ec; }
.hatch { fill: url(#hatch); stroke: #f1b7b1; stroke-width: 2; }
.runway { fill: none; stroke: #c6c5d6; stroke-width: 4; }
.water { fill: #b2d2de; }
.river, .river2, .stream { fill: none; stroke: #b2d2de; stroke-width: 3.500; }
.river { stroke-width: 14; }
.river2 { stroke-width: 12; }
.stream.wide { stroke-width: 7; stroke: #b8cfd9; }
.blue { fill: none; stroke: #7fb2ee; stroke-width: 2.500; }
.sec { fill: none; stroke: #efc684; stroke-width: 4.500; }
.trunk { fill: none; stroke: #eb997f; stroke-width: 5.500; }
.mway { fill: none; stroke: #db6d87; stroke-width: 5.500; }
.rail { fill: none; stroke: #858585; stroke-width: 3; }
.rail.fat { stroke-width: 6; }
.bound { fill: none; stroke: #a98ba9; stroke-width: 5.500; opacity: .8; }
.dash { fill: none; stroke: #ab8fae; stroke-width: 3; stroke-dasharray: 14 4 5 4; opacity: .75; }
.shield rect { fill: #eed8ce; stroke: #dbb09f; stroke-width: 2.500; }
.shield .y { fill: #f0e1cc; stroke: #dcc391; }
.tiles text { font-family: "Noto Sans", sans-serif; font-size: 24px; paint-order: stroke; stroke: #f5f3f0; stroke-opacity: .8; stroke-width: 4px; stroke-linejoin: round; }
.tiles .ref text { font-size: 22px; fill: #73413a; stroke: none; }
.dist { fill: #a583a8; }
.tiles .tehsil text, .tiles .air text, .tiles .exit text { font-size: 20.500px; font-style: italic; }
.tiles .edge text { font-size: 20px; }
.tehsil { fill: #a583a8; }
.edge { fill: #86688a; }
.air { fill: #6955b3; }
.exit { fill: #a2404a; }
.city { fill: #3f3f3f; }
.tiles .city text { font-size: 29px; }
.tiles .city .small { font-size: 22.500px; }
```
